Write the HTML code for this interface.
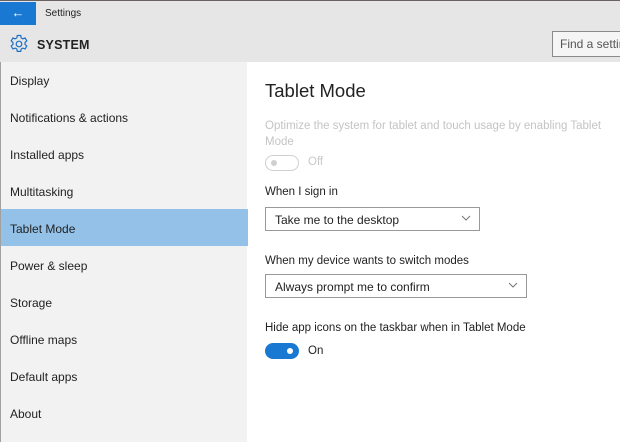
<!DOCTYPE html>
<html><head><meta charset="utf-8"><style>
*{margin:0;padding:0;box-sizing:border-box}
body{width:620px;height:442px;overflow:hidden;background:#fff;font-family:"Liberation Sans",sans-serif;position:relative;color:#1a1a1a}
.top{position:absolute;left:0;top:0;width:620px;height:62px;background:#e6e6e6;border-top:1px solid #6a6262}
.back{position:absolute;left:0;top:1px;width:36px;height:23px;background:#1979d2;color:#fff;font-size:13px;text-align:center;line-height:22px}
.title{position:absolute;left:45px;top:7px;font-size:10px;color:#222}
.sys{position:absolute;left:37px;top:37px;font-size:12.5px;font-weight:bold;color:#222;letter-spacing:0.2px}
.search{position:absolute;left:552px;top:30px;width:80px;height:26px;border:1px solid #8a8a8a;background:#f5f5f5;font-size:12px;color:#555;padding:5px 0 0 7px;white-space:nowrap}
.side{position:absolute;left:0;top:62px;width:247px;height:380px;background:#f2f2f2;border-left:1px solid #a0a0a0}
.item{position:absolute;left:9px;font-size:12px;color:#222}
.sel{position:absolute;left:0;top:147px;width:247px;height:37px;background:#93c1e7}
.h{position:absolute;left:265px;top:80px;font-size:18.5px;color:#222}
.t{position:absolute;left:265px;font-size:11.5px;color:#222}
.dd{position:absolute;left:265px;border:1px solid #999;height:24px;font-size:12px;padding:5px 0 0 9px;color:#222}
.chev{position:absolute;right:8px;top:7px}
</style></head><body>
<div class="top">
<div class="back">&#8592;</div>
<div class="title">Settings</div>
<svg style="position:absolute;left:9px;top:33px" width="20" height="20" viewBox="0 0 20 20" fill="none" stroke="#1c6fc6" stroke-width="1.2">
<path d="M8.3 1.5h3.4l.5 2.4 1.6.9 2.3-.8 1.7 2.9-1.8 1.6v1.9l1.8 1.6-1.7 2.9-2.3-.8-1.6.9-.5 2.4H8.3l-.5-2.4-1.6-.9-2.3.8-1.7-2.9 1.8-1.6V8.5L2.2 6.9l1.7-2.9 2.3.8 1.6-.9z"/>
<circle cx="10" cy="10" r="2.8"/></svg>
<div class="sys">SYSTEM</div>
<div class="search">Find a settin</div>
</div>
<div class="side">
<div class="sel"></div>
<div class="item" style="top:12px">Display</div>
<div class="item" style="top:49px">Notifications &amp; actions</div>
<div class="item" style="top:86px">Installed apps</div>
<div class="item" style="top:123px">Multitasking</div>
<div class="item" style="top:160px">Tablet Mode</div>
<div class="item" style="top:197px">Power &amp; sleep</div>
<div class="item" style="top:234px">Storage</div>
<div class="item" style="top:271px">Offline maps</div>
<div class="item" style="top:308px">Default apps</div>
<div class="item" style="top:345px">About</div>
</div>
<div class="h">Tablet Mode</div>
<div class="t" style="top:118px;color:#c4c4c4;line-height:16px;width:350px">Optimize the system for tablet and touch usage by enabling Tablet Mode</div>
<div style="position:absolute;left:265px;top:155px;width:34px;height:16px;border:1.5px solid #cfcfcf;border-radius:8px"></div>
<div style="position:absolute;left:271px;top:160px;width:6px;height:6px;border-radius:3px;background:#cfcfcf"></div>
<div class="t" style="left:308px;top:156px;color:#c8c8c8">Off</div>
<div class="t" style="top:186px">When I sign in</div>
<div class="dd" style="top:207px;width:215px">Take me to the desktop<svg class="chev" width="10" height="6"><path d="M1 1l4 4 4-4" stroke="#777" fill="none"/></svg></div>
<div class="t" style="top:255px">When my device wants to switch modes</div>
<div class="dd" style="top:274px;width:262px">Always prompt me to confirm<svg class="chev" width="10" height="6"><path d="M1 1l4 4 4-4" stroke="#777" fill="none"/></svg></div>
<div class="t" style="top:322px">Hide app icons on the taskbar when in Tablet Mode</div>
<div style="position:absolute;left:265px;top:343px;width:34px;height:16px;background:#1979d2;border-radius:8px"></div>
<div style="position:absolute;left:287px;top:348px;width:6px;height:6px;border-radius:3px;background:#fff"></div>
<div class="t" style="left:308px;top:345px">On</div>
</body></html>
